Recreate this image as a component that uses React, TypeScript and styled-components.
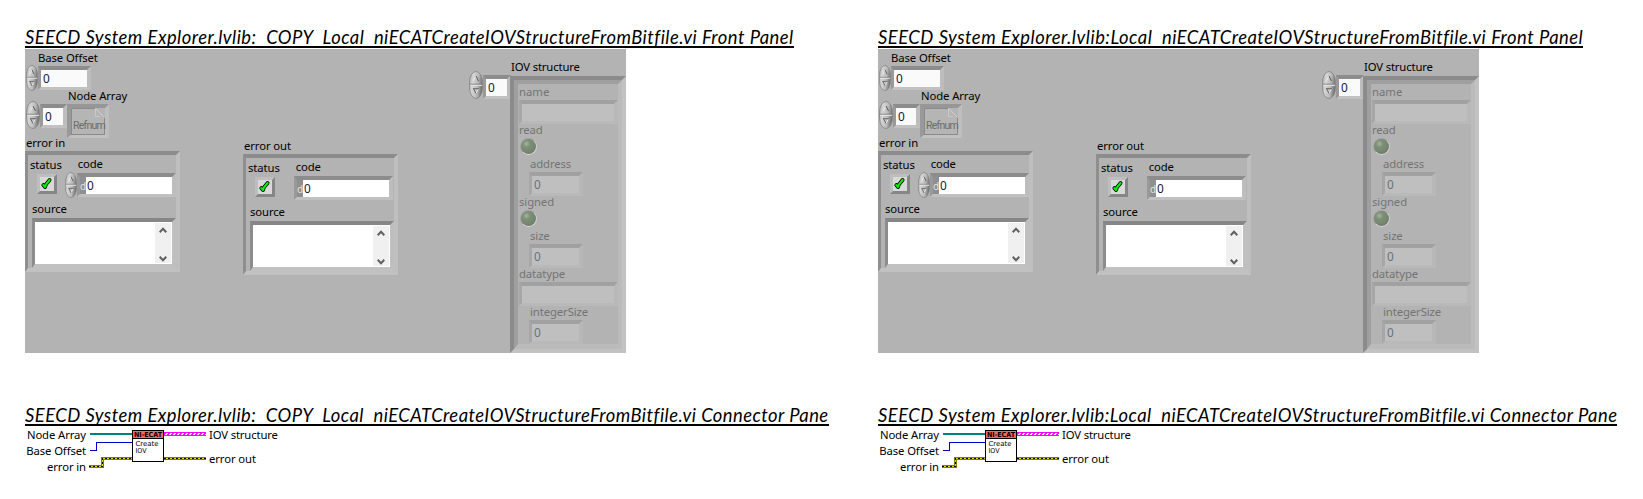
import React from "react";
import styled, { createGlobalStyle } from "styled-components";

const Global = createGlobalStyle`
  body { margin: 0; background: #fff; color: #000; overflow: hidden; }
  * { box-sizing: border-box; }
`;

const Page = styled.main`
  display: flex;
  width: 1643px;
  height: 499px;
  padding-left: 25px;
  font-family: "Noto Sans", "Open Sans", sans-serif;
  font-size: 11.3px;
`;

const Column = styled.section`
  flex: 0 0 853px;
  padding-top: 26px;

  &:last-child {
    flex: 1 1 0;
    min-width: 0;
  }
`;

const Title = styled.h2<{ $spacing: number; $gap?: number }>`
  margin: ${(p) => p.$gap ?? 0}px 0 0;
  width: max-content;
  height: 22px;
  border-bottom: 2px solid #000;
  font: italic 400 18.4px/23px Lato, sans-serif;
  letter-spacing: ${(p) => p.$spacing}px;
  white-space: pre;
`;

const FrontPanel = styled.div`
  display: flex;
  align-items: flex-start;
  width: 601px;
  height: 304px;
  margin-top: 1px;
  background: #b3b3b3;
`;

const Stack = styled.div<{ $width: number; $left?: number; $top?: number }>`
  width: ${(p) => p.$width}px;
  margin-left: ${(p) => p.$left ?? 0}px;
  padding-top: ${(p) => p.$top ?? 0}px;
  flex: none;
`;

const Row = styled.div<{ $top?: number; $left?: number; $height?: number }>`
  display: flex;
  align-items: flex-start;
  margin-top: ${(p) => p.$top ?? 0}px;
  margin-left: ${(p) => p.$left ?? 0}px;
  height: ${(p) => (p.$height ? p.$height + "px" : "auto")};
`;

const Label = styled.div<{ $left?: number; $top?: number; $spacing?: number; $dim?: boolean }>`
  height: 14px;
  line-height: 14px;
  margin-left: ${(p) => p.$left ?? 0}px;
  margin-top: ${(p) => p.$top ?? 0}px;
  letter-spacing: ${(p) => p.$spacing ?? -0.1}px;
  color: ${(p) => (p.$dim ? "#737373" : "#000")};
  white-space: pre;
`;

const Field = styled.div<{ $width: number; $height?: number; $top?: number; $left?: number; $dim?: boolean }>`
  flex: none;
  width: ${(p) => p.$width}px;
  height: ${(p) => p.$height ?? 24}px;
  margin-top: ${(p) => p.$top ?? 0}px;
  margin-left: ${(p) => p.$left ?? 0}px;
  display: flex;
  border-style: solid;
  border-width: 4px 4px 3px 3px;
  border-color: ${(p) => (p.$dim ? "#a1a1a1 #b8b8b8 #b9b9b9 #a7a7a7" : "#8c8c8c #bdbdbd #c1c1c1 #999")};
  background: ${(p) => (p.$dim ? "#bfbfbf" : "#fafafa")};
  color: ${(p) => (p.$dim ? "#66737c" : "#10203a")};
  font-size: 11.8px;
  line-height: 17px;
  padding-left: 2px;
`;

const CodeField = styled(Field)`
  padding-left: 0;
  background: #fff;
`;

const Radix = styled.span`
  width: 6px;
  background: #8f8f8f;
  color: #e2e2e2;
  font-size: 10px;
  line-height: 18px;
`;

const CodeValue = styled.span`
  padding-left: 1px;
`;

const Cluster = styled.div`
  width: 155px;
  height: 121px;
  padding-left: 1px;
  border-style: solid;
  border-width: 4px 4px 4px 3px;
  border-color: #8c8c8c #bfbfbf #c1c1c1 #8f8f8f;
`;

const SourceBox = styled.div`
  display: flex;
  justify-content: flex-end;
  width: 144px;
  height: 50px;
  margin: 2px 0 0 3px;
  border-style: solid;
  border-width: 4px 4px 4px 3px;
  border-color: #868686 #bfbfbf #c1c1c1 #8c8c8c;
  background: #fff;
`;

const ScrollBar = styled.div`
  display: flex;
  flex-direction: column;
  justify-content: space-between;
  align-items: center;
  width: 16px;
  margin: 1px 1px 1px 0;
  padding: 4px 0 1px;
  background: #f0f0f0;
`;

const CheckButton = styled.div`
  flex: none;
  width: 20px;
  height: 20px;
  border-style: solid;
  border-width: 3px;
  border-color: #bebebe #868686 #868686 #bebebe;
  background: #d9d9d9;
`;

const RefnumBox = styled.div`
  position: relative;
  flex: none;
  width: 42px;
  height: 34px;
  margin-top: 3px;
  border-style: solid;
  border-width: 4px 4px 3px 4px;
  border-color: #979797 #bebebe #c1c1c1 #999;
  background: #b5b5b5;
`;

const RefnumText = styled.span`
  position: absolute;
  left: 2px;
  top: 11px;
  font: 10.5px/14px Roboto, sans-serif;
  letter-spacing: -0.75px;
  color: #6c6c6c;
`;

const Structure = styled.div`
  width: 116px;
  height: 277px;
  margin-top: 2px;
  border-style: solid;
  border-width: 4px;
  border-color: #8b8b8b #c2c2c2 #c2c2c2 #8b8b8b;
`;

const StructureInner = styled.div`
  height: 269px;
  border-style: solid;
  border-width: 4px 4px 5px 4px;
  border-color: #9f9f9f #bbb #bbb #9f9f9f;
  padding-top: 1px;
`;

const Led = styled.div`
  width: 17px;
  height: 17px;
  margin: 1px 0 2px 2px;
  border-radius: 50%;
  border: 1.5px solid;
  border-color: #a2a2a2 #cfcfcf #d6d6d6 #a2a2a2;
  background: radial-gradient(circle at 36% 32%, #a3b59c 0, #7d8f76 26%, #74866e 60%, #62705e 100%);
`;

const Connector = styled.div`
  display: flex;
  height: 50px;
  margin-top: 1px;
`;

const Inputs = styled.div`
  width: 61px;
  margin-right: 1px;
  display: flex;
  flex-direction: column;
  align-items: flex-end;
  padding-top: 1px;
`;

const Outputs = styled.div`
  padding: 1px 0 0 3px;
`;

function Spinner({ w = 12, h = 26, left = 1, top = 0 }: { w?: number; h?: number; left?: number; top?: number }) {
  const id = React.useId();
  return (
    <Row $left={left} $top={top}>
      <svg width={w} height={h} viewBox="0 0 14 28" preserveAspectRatio="none">
        <defs>
          <linearGradient id={id} x1="0" y1="0" x2="1" y2="0.2">
            <stop offset="0" stopColor="#a6a6a6" />
            <stop offset="0.3" stopColor="#d6d6d6" />
            <stop offset="0.7" stopColor="#b9b9b9" />
            <stop offset="1" stopColor="#777" />
          </linearGradient>
        </defs>
        <rect x="0.5" y="0.5" width="13" height="27" rx="6.5" ry="11" fill={`url(#${id})`} stroke="#838383" strokeWidth="0.8" />
        <path d="M1 13.2H13" stroke="#888" />
        <path d="M1 14.4H13" stroke="#e4e4e4" />
        <path d="M4.5 9.8L7 4.8" stroke="#eee" fill="none" />
        <path d="M7 5L9.5 10" stroke="#555" fill="none" />
        <path d="M9.5 17.7L7 22.5" stroke="#e8e8e8" fill="none" />
        <path d="M4 17.7H10M4.5 17.7L7 22.5" stroke="#666" fill="none" />
      </svg>
    </Row>
  );
}

function Chevron({ down }: { down?: boolean }) {
  return (
    <svg width="8" height="6" viewBox="0 0 8 6">
      <path d={down ? "M0.7 0.8L4 4.2L7.3 0.8" : "M0.7 5.2L4 1.8L7.3 5.2"} fill="none" stroke="#606060" strokeWidth="2" />
    </svg>
  );
}

function Check() {
  return (
    <CheckButton>
      <svg width="14" height="14" viewBox="0 0 14 14" display="block">
        <path d="M3.3 8.1L5 10L6 7.4L9.6 3" fill="none" stroke="#000" strokeWidth="3.8" strokeLinejoin="round" strokeLinecap="round" />
        <path d="M3.3 8.1L5 10L6 7.4L9.6 3" fill="none" stroke="#00f000" strokeWidth="2.2" strokeLinejoin="round" strokeLinecap="round" />
      </svg>
    </CheckButton>
  );
}

function ErrorCluster({ control }: { control?: boolean }) {
  return (
    <Cluster>
      <Row $height={19}>
        <Label $left={1} $top={3}>status</Label>
        <Label $left={16} $top={2}>code</Label>
      </Row>
      <Row $height={29}>
        <Row $left={8}><Check /></Row>
        {control ? <Spinner w={12} h={26} left={8} top={-2} /> : <Row $left={19} />}
        <CodeField $width={99} $height={24} $top={-1}>
          <Radix>d</Radix>
          <CodeValue>0</CodeValue>
        </CodeField>
      </Row>
      <Label $left={3} $top={-1}>source</Label>
      <SourceBox>
        <ScrollBar>
          <Chevron />
          <Chevron down />
        </ScrollBar>
      </SourceBox>
    </Cluster>
  );
}

function Panel() {
  return (
    <FrontPanel>
      <Stack $width={155} $top={2}>
        <Label $left={13}>Base Offset</Label>
        <Row $height={26}>
          <Spinner />
          <Field $width={53} $top={1}>0</Field>
        </Row>
        <Label $left={43} $top={-2}>Node Array</Label>
        <Row $top={-2} $height={37}>
          <Spinner w={14} h={28} />
          <Field $width={27} $top={3}>0</Field>
          <RefnumBox>
            <svg width="34" height="27" viewBox="0 0 34 27" display="block">
              <path d="M0.5 26.5V0.5H24M0 26.5H33.5V9" fill="none" stroke="#8a8a8a" />
              <path d="M24.5 1V8.5H29" fill="none" stroke="#c9c9c9" />
              <path d="M24.5 0.5L33.5 9.5" fill="none" stroke="#cfcfcf" />
            </svg>
            <RefnumText>Refnum</RefnumText>
          </RefnumBox>
        </Row>
        <Label $left={1} $top={-2}>error in</Label>
        <Row $top={1}><ErrorCluster control /></Row>
      </Stack>
      <Stack $width={155} $left={63} $top={90}>
        <Label $left={1}>error out</Label>
        <Row $top={1}><ErrorCluster /></Row>
      </Stack>
      <Stack $width={41} $left={71} $top={22}>
        <Row>
          <Spinner w={14} h={28} left={0} />
          <Field $width={28} $top={4}>0</Field>
        </Row>
      </Stack>
      <Stack $width={116} $top={11}>
        <Label $left={1} $spacing={-0.15}>IOV structure</Label>
        <Structure>
          <StructureInner>
            <Label $dim $left={1} $spacing={0}>name</Label>
            <Field $dim $width={99} $left={1} $top={1} />
            <Label $dim $left={1} $top={-1}>read</Label>
            <Led />
            <Label $dim $left={12} $top={1}>address</Label>
            <Field $dim $width={54} $left={11} $top={1}>0</Field>
            <Label $dim $left={1} $top={-1}>signed</Label>
            <Led />
            <Label $dim $left={12} $top={1}>size</Label>
            <Field $dim $width={54} $left={11} $top={1}>0</Field>
            <Label $dim $left={1} $top={-1}>datatype</Label>
            <Field $dim $width={99} $left={1} $top={1} />
            <Label $dim $left={12} $top={-1}>integerSize</Label>
            <Field $dim $width={54} $left={11} $top={1}>0</Field>
          </StructureInner>
        </Structure>
      </Stack>
    </FrontPanel>
  );
}

function Wiring() {
  return (
    <svg width="119" height="50" viewBox="0 0 119 50" shapeRendering="crispEdges">
      <path d="M3 7H45" stroke="#008080" strokeWidth="2" />
      <path d="M3 23.5H9.5V15.5H45" fill="none" stroke="#0000c8" />
      <g fill="none">
        <path d="M2 39.5H15.5V31.5H45M77 31.5H119" stroke="#7c7c00" strokeWidth="3" />
        <path d="M2 39.5H15.5V31.5H45M77 31.5H119" stroke="#e6e600" strokeWidth="1" />
        <path d="M2 39.5H15.5V31.5H45M77 31.5H119" stroke="#000" strokeWidth="1" strokeDasharray="2 2" />
        <path d="M77 7H119" stroke="#f0f" strokeWidth="4" />
        <path d="M78 7.5H119" stroke="#fff" strokeDasharray="2 2" />
        <path d="M79 6.5H119" stroke="#fff" strokeDasharray="2 2" />
      </g>
      <rect x="45.5" y="3.5" width="31" height="31" fill="#fff" stroke="#000" />
      <rect x="46" y="4" width="30" height="7" fill="#ff6666" />
      <path d="M46 11.5H76" stroke="#000" />
      <g fontFamily="DejaVu Sans, sans-serif" fill="#000">
        <text x="47" y="10" fontSize="7" fontWeight="700" textLength="28" lengthAdjust="spacingAndGlyphs">NI-ECAT</text>
        <text x="48.5" y="18.5" fontSize="6.8" textLength="23" lengthAdjust="spacingAndGlyphs">Create</text>
        <text x="48.5" y="26" fontSize="6.8" textLength="11" lengthAdjust="spacingAndGlyphs">IOV</text>
      </g>
    </svg>
  );
}

function Side({ name, spacing }: { name: string; spacing: [number, number] }) {
  return (
    <Column>
      <Title $spacing={spacing[0]}>{name} Front Panel</Title>
      <Panel />
      <Title $spacing={spacing[1]} $gap={51}>{name} Connector Pane</Title>
      <Connector>
        <Inputs>
          <Label>Node Array</Label>
          <Label $top={2}>Base Offset</Label>
          <Label $top={2}>error in</Label>
        </Inputs>
        <Wiring />
        <Outputs>
          <Label $spacing={-0.15}>IOV structure</Label>
          <Label $top={10}>error out</Label>
        </Outputs>
      </Connector>
    </Column>
  );
}

export default function App() {
  return (
    <>
      <Global />
      <Page>
        <Side name="SEECD System Explorer.lvlib:  COPY  Local  niECATCreateIOVStructureFromBitfile.vi" spacing={[0.47, 0.46]} />
        <Side name="SEECD System Explorer.lvlib:Local  niECATCreateIOVStructureFromBitfile.vi" spacing={[0.5, 0.48]} />
      </Page>
    </>
  );
}
